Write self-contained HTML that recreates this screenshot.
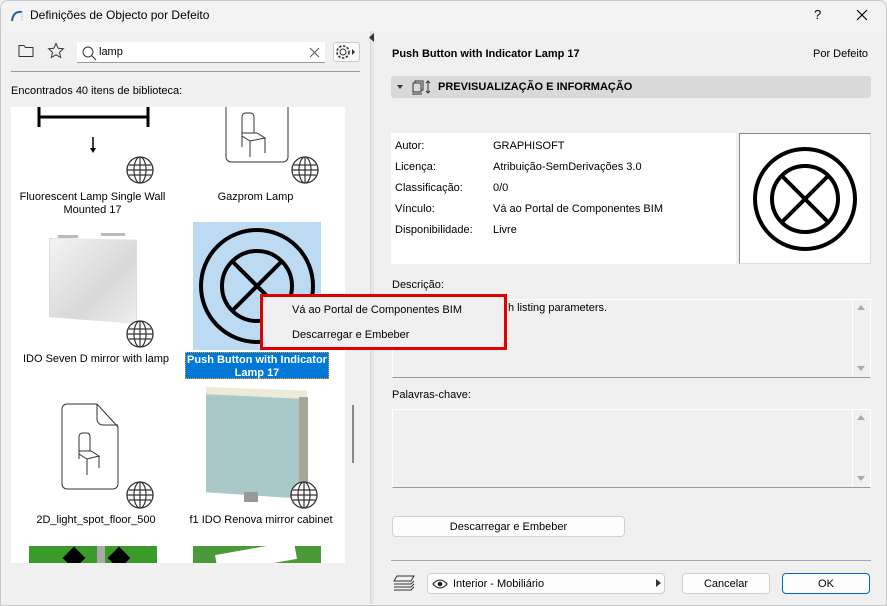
<!DOCTYPE html>
<html><head><meta charset="utf-8"><style>
*{box-sizing:border-box;margin:0;padding:0}
body{width:887px;height:606px;overflow:hidden;background:#f0f0f0;font-family:"Liberation Sans",sans-serif;font-size:11px;color:#000;position:relative}
.a{position:absolute}
.t{position:absolute;white-space:nowrap}
.lbl{text-align:center;font-size:11px;line-height:13px}
.btn{position:absolute;background:#fdfdfd;border:1px solid #d0d0d0;border-radius:4px;text-align:center;font-size:11px}
</style></head><body>
<div class="a" style="left:0;top:0;width:887px;height:606px;border:1px solid #c8c8c8;border-radius:8px 8px 0 0"></div>
<div class="a" style="left:1px;top:1px;width:885px;height:30px;background:#f3f3f3;border-radius:8px 8px 0 0"></div>
<svg class="a" style="left:9px;top:8px" width="16" height="16"><path d="M3 13 Q4 3 13 4" stroke="#1c5fb8" stroke-width="2" fill="none"/><path d="M13 4 v9" stroke="#9ab" stroke-width="1" stroke-dasharray="1 1"/></svg>
<div class="t" style="left:30px;top:8px;font-size:12px">Definições de Objecto por Defeito</div>
<div class="t" style="left:814px;top:7px;font-size:13px">?</div>
<svg class="a" style="left:856px;top:9px" width="12" height="12"><path d="M1 1L11 11M11 1L1 11" stroke="#000" stroke-width="1.2"/></svg>

<svg class="a" style="left:18px;top:44px" width="16" height="14"><path d="M1 1.5h5l1.5 2H15v9H1z" fill="none" stroke="#333"/></svg>
<svg class="a" style="left:47px;top:42px" width="18" height="18"><path d="M9 1.5l2.2 4.8 5.2.5-3.9 3.5 1.1 5.1L9 12.8l-4.6 2.6 1.1-5.1L1.6 6.8l5.2-.5z" fill="none" stroke="#333"/></svg>
<div class="a" style="left:77px;top:42px;width:248px;height:21px;background:#fff;border-bottom:1px solid #999"></div>
<svg class="a" style="left:81px;top:45px" width="16" height="16"><circle cx="7" cy="7" r="5" fill="none" stroke="#333"/><path d="M10.5 10.5L15 15" stroke="#333"/></svg>
<div class="t" style="left:99px;top:46px;font-size:11px">lamp</div>
<svg class="a" style="left:309px;top:47px" width="11" height="11"><path d="M1 1L10 10M10 1L1 10" stroke="#555"/></svg>
<div class="a" style="left:333px;top:42px;width:27px;height:20px;background:#fafafa;border:1px solid #ccc;border-radius:3px"></div>
<svg class="a" style="left:335px;top:44px" width="22" height="16"><circle cx="8" cy="8" r="3" fill="none" stroke="#333"/><circle cx="8" cy="8" r="6" fill="none" stroke="#333" stroke-dasharray="2.5 1.5" stroke-width="1.6"/><path d="M17 5l3 3-3 3z" fill="#333"/></svg>
<div class="a" style="left:11px;top:71px;width:349px;height:1px;background:#999"></div>
<div class="t" style="left:11px;top:85px">Encontrados 40 itens de biblioteca:</div>

<div class="a" style="left:11px;top:107px;width:334px;height:456px;background:#fff;overflow:hidden">
 <svg class="a" style="left:26px;top:0" width="114" height="50"><path d="M2 0v20M111 0v20M2 10h109" stroke="#000" stroke-width="3"/><path d="M56 30v13" stroke="#000" stroke-width="1.5"/><path d="M53 41l3 5 3-5z" fill="#000"/></svg>
 <svg class="a" style="left:213px;top:0" width="70" height="60"><path d="M2 0v50a5 5 0 0 0 5 5h52a5 5 0 0 0 5-5V0" fill="none" stroke="#333"/><path d="M18 40V10q0-4 4-4h4q4 0 4 4v16M18 26h15l8 5-15 3-8-5zM26 34v16M41 31v15" fill="none" stroke="#333"/></svg>
 <div class="lbl a" style="left:0;top:84px;width:163px">Fluorescent Lamp Single Wall<br>Mounted 17</div>
 <div class="lbl a" style="left:163px;top:84px;width:163px">Gazprom Lamp</div>
 <div class="a" style="left:38px;top:131px;width:88px;height:86px;background:linear-gradient(135deg,#f4f4f4,#d8d8d8 60%,#eee);border:1px solid #ddd;clip-path:polygon(0 0,100% 2%,100% 100%,0 92%)"></div>
 <div class="a" style="left:47px;top:128px;width:20px;height:3px;background:#bbb"></div>
 <div class="a" style="left:90px;top:126px;width:24px;height:3px;background:#bbb"></div>
 <div class="lbl a" style="left:0;top:246px;width:170px">IDO Seven D mirror with lamp</div>
 <div class="a" style="left:182px;top:115px;width:128px;height:128px;background:#bcdaf2"></div>
 <svg class="a" style="left:182px;top:115px" width="128" height="128"><circle cx="64" cy="64" r="56" fill="none" stroke="#000" stroke-width="4"/><circle cx="64" cy="64" r="35" fill="none" stroke="#000" stroke-width="4"/><path d="M39 39L89 89M89 39L39 89" stroke="#000" stroke-width="4"/></svg>
 <div class="a lbl" style="left:174px;top:245px;width:144px;height:27px;background:#0078d7;color:#fff;font-weight:bold;border:1px dotted #f90;padding-top:1px">Push Button with Indicator<br>Lamp 17</div>
 <svg class="a" style="left:49px;top:296px" width="66" height="88"><path d="M2 6a5 5 0 0 1 5-5h30l21 23v57a5 5 0 0 1-5 5H7a5 5 0 0 1-5-5z" fill="none" stroke="#333"/><path d="M37 1v15a6 6 0 0 0 6 6h15" fill="none" stroke="#333"/><path d="M19 56V34q0-4 4-4h4q3 0 3 4v14M19 48h12l8 5-12 3-8-5zM27 56v16M39 53v12" fill="none" stroke="#333"/></svg>
 <div class="a" style="left:195px;top:280px;width:101px;height:112px;background:#a9c8c8;clip-path:polygon(0 4%,100% 10%,100% 100%,0 94%)"></div>
 <div class="a" style="left:195px;top:280px;width:101px;height:12px;background:#ecebd8;clip-path:polygon(0 0,100% 30%,100% 100%,0 60%)"></div>
 <div class="a" style="left:288px;top:290px;width:9px;height:102px;background:#a7a697"></div>
 <div class="a" style="left:233px;top:385px;width:14px;height:10px;background:#999"></div>
 <div class="lbl a" style="left:0;top:407px;width:170px">2D_light_spot_floor_500</div>
 <div class="lbl a" style="left:170px;top:407px;width:160px">f1 IDO Renova mirror cabinet</div>
 <div class="a" style="left:18px;top:439px;width:128px;height:20px;background:#3a9a2a"></div>
 <div class="a" style="left:55px;top:443px;width:16px;height:16px;background:#000;transform:rotate(45deg)"></div>
 <div class="a" style="left:100px;top:443px;width:16px;height:16px;background:#000;transform:rotate(45deg)"></div>
 <div class="a" style="left:86px;top:439px;width:8px;height:20px;background:#aaa"></div>
 <div class="a" style="left:182px;top:439px;width:128px;height:20px;background:#4a9a3a"></div>
 <div class="a" style="left:205px;top:441px;width:80px;height:18px;background:#fff;transform:rotate(-10deg)"></div>
</div>
<svg width="0" height="0" style="position:absolute"><defs><g id="gl"><circle cx="14" cy="14" r="13" fill="#fff" stroke="#333" stroke-width="1.3"/><ellipse cx="14" cy="14" rx="6" ry="13" fill="none" stroke="#333" stroke-width="1.2"/><path d="M1 14h26M3 9h22M3 19h22M14 1v26" stroke="#333" stroke-width="1.2" fill="none"/></g></defs></svg>
<svg class="a" style="left:126px;top:156px" width="28" height="28"><use href="#gl"/></svg>
<svg class="a" style="left:291px;top:156px" width="28" height="28"><use href="#gl"/></svg>
<svg class="a" style="left:126px;top:320px" width="28" height="28"><use href="#gl"/></svg>
<svg class="a" style="left:126px;top:481px" width="28" height="28"><use href="#gl"/></svg>
<svg class="a" style="left:290px;top:481px" width="28" height="28"><use href="#gl"/></svg>
<div class="a" style="left:352px;top:405px;width:2px;height:58px;background:#888"></div>
<div class="a" style="left:370px;top:31px;width:4px;height:573px;background:#e6e6e6;border-left:1px solid #d8d8d8"></div>
<svg class="a" style="left:369px;top:33px" width="6" height="9"><path d="M5 0v9L0 4.5z" fill="#333"/></svg>

<div class="t" style="left:392px;top:48px;font-weight:bold">Push Button with Indicator Lamp 17</div>
<div class="t" style="left:813px;top:48px">Por Defeito</div>
<div class="a" style="left:391px;top:76px;width:480px;height:22px;background:#d9d9d9;border-radius:3px"></div>
<svg class="a" style="left:396px;top:80px" width="40" height="16"><path d="M1 5h6l-3 4z" fill="#333"/><rect x="19" y="1" width="8" height="9" fill="none" stroke="#333"/><rect x="17" y="3" width="8" height="9" fill="#d9d9d9" stroke="#333"/><path d="M16 14h10M32 1v12M30 3l2-2 2 2M30 11l2 2 2-2" stroke="#333" fill="none"/></svg>
<div class="t" style="left:438px;top:81px;font-weight:bold">PREVISUALIZAÇÃO E INFORMAÇÃO</div>
<div class="a" style="left:391px;top:133px;width:345px;height:131px;background:#fff"></div>
<div class="t" style="left:395px;top:136px;line-height:21px">Autor:<br>Licença:<br>Classificação:<br>Vínculo:<br>Disponibilidade:</div>
<div class="t" style="left:493px;top:136px;line-height:21px">GRAPHISOFT<br>Atribuição-SemDerivações 3.0<br>0/0<br>Vá ao Portal de Componentes BIM<br>Livre</div>
<div class="a" style="left:739px;top:133px;width:132px;height:131px;background:#fff;border:1px solid #888;border-right-color:#ddd;border-bottom-color:#ddd"></div>
<svg class="a" style="left:739px;top:133px" width="132" height="131"><circle cx="66" cy="66" r="50" fill="none" stroke="#000" stroke-width="4"/><circle cx="66" cy="66" r="33" fill="none" stroke="#000" stroke-width="4"/><path d="M43 43L89 89M89 43L43 89" stroke="#000" stroke-width="4"/></svg>

<div class="t" style="left:392px;top:279px">Descrição:</div>
<div class="a" style="left:392px;top:299px;width:479px;height:79px;border:1px solid #fff;border-bottom:1px solid #999"></div>
<div class="a" style="left:852px;top:300px;width:1px;height:77px;background:#fff"></div>
<svg class="a" style="left:856px;top:304px" width="10" height="70"><path d="M1 6l4-5 4 5z M1 62l4 5 4-5z" fill="#aaa"/></svg>
<div class="t" style="left:508px;top:302px">h listing parameters.</div>
<div class="t" style="left:392px;top:389px">Palavras-chave:</div>
<div class="a" style="left:392px;top:409px;width:479px;height:79px;border:1px solid #fff;border-bottom:1px solid #999"></div>
<div class="a" style="left:852px;top:410px;width:1px;height:77px;background:#fff"></div>
<svg class="a" style="left:856px;top:414px" width="10" height="70"><path d="M1 6l4-5 4 5z M1 62l4 5 4-5z" fill="#aaa"/></svg>
<div class="btn" style="left:392px;top:516px;width:233px;height:21px;line-height:20px">Descarregar e Embeber</div>
<div class="a" style="left:391px;top:560px;width:480px;height:1px;background:#aaa"></div>
<svg class="a" style="left:393px;top:575px" width="24" height="16"><path d="M4 1h17l-3 5H1z M1 9h17l3-3 M1 12h17l3-3 M1 15h17l3-3" fill="none" stroke="#333"/></svg>
<div class="btn" style="left:427px;top:573px;width:238px;height:21px"></div>
<svg class="a" style="left:432px;top:578px" width="16" height="12"><path d="M1 6q7-8 14 0q-7 8-14 0z" fill="none" stroke="#222"/><circle cx="8" cy="6" r="2.3" fill="#222"/></svg>
<div class="t" style="left:453px;top:578px">Interior - Mobiliário</div>
<svg class="a" style="left:656px;top:579px" width="5" height="8"><path d="M0 0l5 4-5 4z" fill="#333"/></svg>
<div class="btn" style="left:682px;top:573px;width:88px;height:21px;line-height:21px">Cancelar</div>
<div class="btn" style="left:782px;top:573px;width:88px;height:21px;line-height:21px;border-color:#0067c0">OK</div>

<div class="a" style="left:260px;top:294px;width:247px;height:56px;background:#f0f0f0;border:3px solid #e00000"></div>
<div class="t" style="left:292px;top:304px">Vá ao Portal de Componentes BIM</div>
<div class="t" style="left:292px;top:329px">Descarregar e Embeber</div>
</body></html>
